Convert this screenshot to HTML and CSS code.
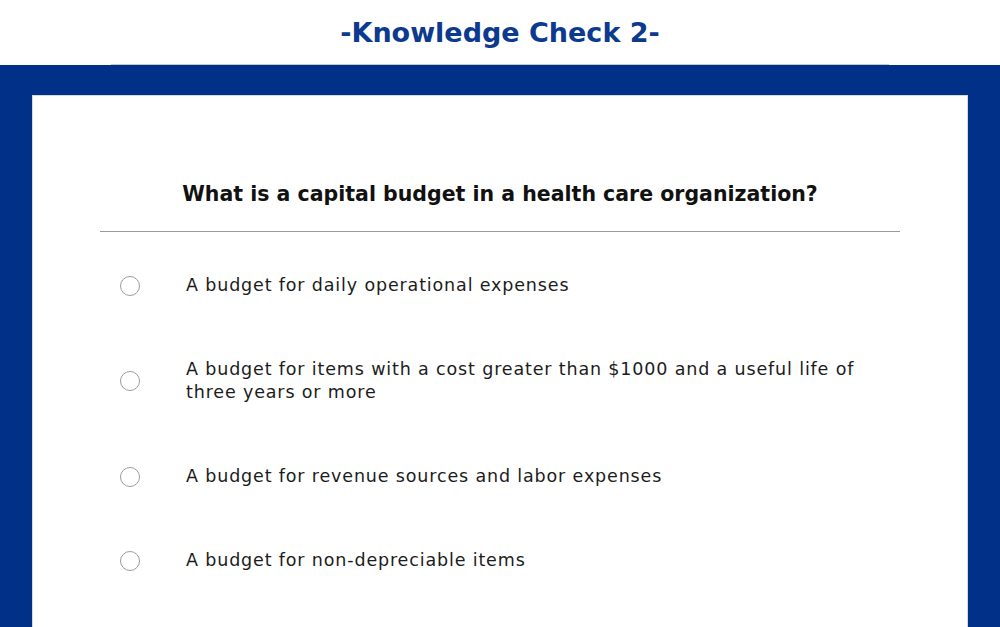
FILE: index.html
```html
<!DOCTYPE html>
<html>
<head>
<meta charset="utf-8">
<link rel="stylesheet" href="styles.css">
</head>
<body>
<header class="top">
  <h1 class="title">-Knowledge Check 2-</h1>
</header>
<div class="rule"></div>
<main class="band">
  <section class="card">
    <h2 class="question">What is a capital budget in a health care organization?</h2>
    <div class="divider"></div>
    <ul class="options">
      <li class="option"><span class="radio"></span><span class="label">A budget for daily operational expenses</span></li>
      <li class="option"><span class="radio"></span><span class="label">A budget for items with a cost greater than $1000 and a useful life of three years or more</span></li>
      <li class="option"><span class="radio"></span><span class="label">A budget for revenue sources and labor expenses</span></li>
      <li class="option"><span class="radio"></span><span class="label">A budget for non-depreciable items</span></li>
    </ul>
  </section>
</main>
</body>
</html>
```
FILE: styles.css
```css
* { box-sizing: border-box; }
html, body { margin: 0; padding: 0; background: #fff; overflow: hidden; }
body { font-family: "DejaVu Sans", "Noto Sans", sans-serif; height: 627px; }
.top { height: 64px; display: flex; align-items: center; justify-content: center; }
.title { margin: 0; font-family: "DejaVu Sans", sans-serif; font-size: 27px; font-weight: 700; color: #0b3a8e; }
.rule { height: 1px; margin: 0 111px; background: #c8c8c8; }
.band { background: #003087; padding: 31px 33px 0; height: 562px; }
.card { background: #fff; height: 531px; padding: 80px 67px 0; box-shadow: 0 0 0 1px #d8d8d8; }
.question { margin: 0; text-align: center; font-family: "DejaVu Sans", sans-serif; font-size: 20.5px; font-weight: 700; line-height: 36px; color: #111; }
.divider { height: 1px; background: #9a9a9a; margin-top: 19px; }
.options { list-style: none; margin: 11px 0 0; padding: 0; }
.option { display: flex; align-items: center; padding: 31px 0 30px; }
.radio { flex: none; width: 20px; height: 20px; border: 1.5px solid #9c9c9c; border-radius: 50%; margin-left: 20px; margin-right: 46px; background: #fff; }
.label { font-size: 17.5px; line-height: 23px; letter-spacing: 0.85px; color: #1c1c1c; max-width: 672px; }
```
